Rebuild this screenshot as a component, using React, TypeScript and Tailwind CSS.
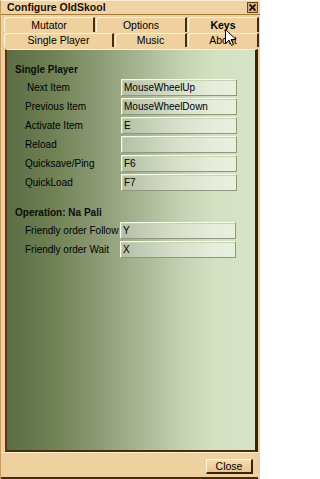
import React from 'react';

const font = { fontFamily: '"Liberation Sans", Arial, sans-serif' };

type Tab = { label: string; w: string; active?: boolean };

const row1: Tab[] = [
  { label: 'Mutator', w: 'w-[91px]' },
  { label: 'Options', w: 'w-[91px]' },
  { label: 'Keys', w: 'w-[71px]', active: true },
];
const row2: Tab[] = [
  { label: 'Single Player', w: 'w-[110px]' },
  { label: 'Music', w: 'w-[72px]' },
  { label: 'About', w: 'w-[71px]' },
];

const TabButton: React.FC<{ tab: Tab }> = ({ tab }) => (
  <div
    className={`${tab.w} h-full flex items-center justify-center bg-[#efd09f] border-t border-l border-t-[#fff3dc] border-l-[#fff3dc] border-r-2 border-r-[#4a2c08] rounded-tl-[4px] text-[10.5px] leading-none text-black ${
      tab.active ? 'font-bold' : ''
    }`}
  >
    {tab.label}
  </div>
);

const Field: React.FC<{ label: string; value: string; indent?: boolean; narrow?: boolean }> = ({ label, value, indent, narrow }) => (
  <div className="flex h-[17px] items-center">
    <div
      className={`${narrow ? 'w-[113px]' : 'w-[114px]'} shrink-0 whitespace-nowrap overflow-hidden text-[10px] text-black ${
        indent ? 'pl-[20px]' : 'pl-[18px]'
      }`}
    >
      {label}
    </div>
    <div className="w-[116px] h-[17px] flex items-center px-[2px] border border-t-[#f4fbe9] border-l-[#f4fbe9] border-b-[#8e9779] border-r-[#8e9779] shadow-[inset_1px_1px_0_#c8d2b4] bg-gradient-to-r from-white/25 to-white/45 text-[10px] text-black">
      {value}
    </div>
  </div>
);

const Heading: React.FC<{ text: string }> = ({ text }) => (
  <div className="h-[14px] flex items-center pl-[8px] text-[10px] font-bold text-[#0c0c06]">{text}</div>
);

export default function App() {
  return (
    <div style={font} className="relative w-[260px] h-[479px] overflow-hidden bg-[#efd09f] flex flex-col border-l border-l-[#c89c60] border-t border-t-[#fff0d4]">
      {/* title bar */}
      <div className="h-[14px] flex items-center justify-between pl-[6px] pr-[2px] border-b border-b-[#a0783c] bg-[#f0d3a4]">
        <span className="text-[10.5px] font-bold leading-none text-[#1a0e00]">Configure OldSkool</span>
        <div className="w-[11px] h-[11px] flex items-center justify-center bg-[#d8b27a] border border-[#6a4412]">
          <svg width="7" height="7" viewBox="0 0 7 7">
            <path d="M0.5 0.5 L6.5 6.5 M6.5 0.5 L0.5 6.5" stroke="#1a0e00" strokeWidth="1.8" />
          </svg>
        </div>
      </div>

      {/* tabs */}
      <div className="mt-[2px] pl-[3px] flex flex-col gap-px">
        <div className="h-[15px] flex gap-[1px]">
          {row1.map(t => (
            <TabButton key={t.label} tab={t} />
          ))}
        </div>
        <div className="h-[14px] flex gap-[1px]">
          {row2.map(t => (
            <TabButton key={t.label} tab={t} />
          ))}
        </div>
      </div>

      {/* panel */}
      <div className="mt-[2px] ml-[4px] w-[253px] h-[403px] border-t border-t-[#f6f0da] border-l-2 border-l-[#5a3a0c] border-r-[3px] border-r-[#3a2206] border-b-2 border-b-[#4a2c08] bg-[linear-gradient(to_right,#5b6d45_0%,#6f8054_18%,#8e9c76_38%,#aab896_55%,#c4d1b1_70%,#d4e1c3_84%,#d6e3c6_100%)] pt-[12px] flex flex-col">
        <Heading text="Single Player" />
        <div className="mt-[3px] flex flex-col gap-[2px]">
          <Field label="Next Item" value="MouseWheelUp" indent />
          <Field label="Previous Item" value="MouseWheelDown" />
          <Field label="Activate Item" value="E" />
          <Field label="Reload" value="" />
          <Field label="Quicksave/Ping" value="F6" />
          <Field label="QuickLoad" value="F7" />
        </div>
        <div className="mt-[14px]">
          <Heading text="Operation: Na Pali" />
        </div>
        <div className="mt-[3px] flex flex-col gap-[2px]">
          <Field label="Friendly order Follow" value="Y" narrow />
          <Field label="Friendly order Wait" value="X" narrow />
        </div>
      </div>

      {/* bottom bar */}
      <div className="flex-1 flex items-start justify-end pt-[6px] pr-[5px] border-t border-t-[#fff0d4] border-b-2 border-b-[#4a2c08] mr-[2px]">
        <button className="w-[47px] h-[15px] flex items-center justify-center bg-[linear-gradient(to_bottom,#f6dcb0,#e8c48e)] border-t border-l border-t-[#fff4de] border-l-[#fff4de] border-r-2 border-b-2 border-r-[#3a2206] border-b-[#3a2206] text-[10.5px] leading-none text-black">
          Close
        </button>
      </div>

      {/* mouse cursor */}
      <svg className="absolute left-[224px] top-[28px]" width="13" height="18" viewBox="0 0 13 18">
        <path d="M0.5 0.5 L0.5 14.5 L4 11 L6.5 16.5 L8.5 15.5 L6 10.5 L11 10.5 Z" fill="#ffffff" stroke="#000000" strokeWidth="1" />
      </svg>
    </div>
  );
}
